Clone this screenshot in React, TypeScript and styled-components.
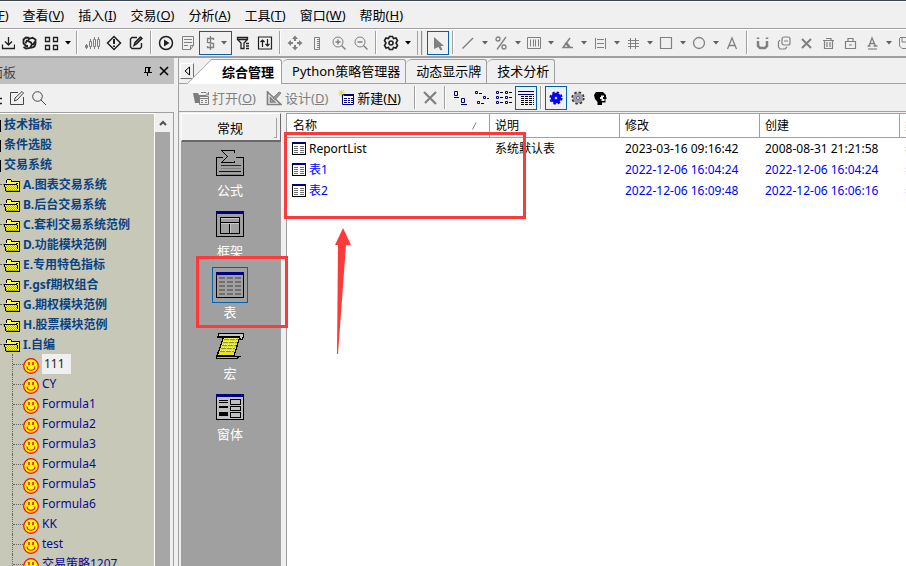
import React from "react";
import styled, { createGlobalStyle, css } from "styled-components";

const GlobalStyle = createGlobalStyle`
  * { box-sizing: border-box; }
  body { margin: 0; background: #f0f0f0; overflow: hidden; }
  body, button, table { font-family: "Noto Sans", "Noto Sans CJK SC", sans-serif; font-size: 12px; color: #000; }
  button { margin: 0; padding: 0; border: 0; background: none; white-space: nowrap; }
`;

const LINE = "#a0a0a0";
const BLUE = "#0063b1";
const RED = "#fc3a3a";

const Page = styled.div`
  position: relative;
  display: flex;
  flex-direction: column;
  height: 100vh;
  border-top: 1px solid #3c444e;
  background: #f0f0f0;
  overflow: hidden;
`;

const MenuBar = styled.nav`
  display: flex;
  flex: none;
  gap: 14px;
  height: 28px;
  margin-left: -32px;
  border-top: 1px solid #fff;
  border-bottom: 1px solid ${LINE};
`;

const MenuItem = styled.button`
  font-size: 13px;
  line-height: 26px;
`;

const Toolbar = styled.div`
  display: flex;
  flex: none;
  align-items: center;
  height: 29px;
  padding-bottom: 1px;
  border-top: 1px solid #fff;
  border-bottom: 2px solid ${LINE};
  overflow: hidden;
`;

const ToolGroup = styled.div`
  display: flex;
  flex: none;
  align-items: center;
  margin-left: -4px;
`;

const ToolButton = styled.button<{ $active?: boolean; $wide?: boolean }>`
  display: flex;
  flex: none;
  align-items: center;
  justify-content: center;
  width: ${(p) => (p.$wide ? 33 : 22)}px;
  height: 24px;
  ${(p) => p.$active && css`border: 1px solid ${BLUE};`}
`;

const CaretButton = styled.button`
  display: flex;
  flex: none;
  align-items: center;
  justify-content: center;
  width: 11px;
  height: 24px;
`;

const Separator = styled.span`
  flex: none;
  width: 2px;
  height: 23px;
  margin: 0 3px;
  border-left: 1px solid ${LINE};
  border-right: 1px solid #fff;
`;

const BandEnd = styled.span`
  flex: none;
  width: 6px;
  height: 24px;
  margin: 0 4px;
  border-left: 1px solid ${LINE};
  border-right: 2px groove #e0e0e0;
`;

const Body = styled.div`
  display: flex;
  flex: 1;
  min-height: 0;
`;

const LeftPanel = styled.aside`
  display: flex;
  flex-direction: column;
  flex: none;
  width: 178px;
  padding-right: 4px;
`;

const PanelHeader = styled.header`
  display: flex;
  flex: none;
  align-items: center;
  height: 26px;
  padding-right: 2px;
  background: #c0c0c0;
  color: #444;
  font-size: 13px;
`;

const PanelTitle = styled.span`
  flex: 1;
  margin-left: -10px;
`;

const PanelButton = styled.button`
  display: flex;
  align-items: center;
  justify-content: center;
  width: 16px;
  height: 16px;
`;

const PanelTools = styled.div`
  display: flex;
  flex: none;
  align-items: center;
  height: 28px;
  margin-left: -16px;
`;

const TreeFrame = styled.div`
  display: flex;
  flex: 1;
  min-height: 0;
  padding-right: 3px;
  border-top: 1px solid ${LINE};
  border-right: 1px solid ${LINE};
`;

const Tree = styled.ul`
  flex: 1;
  margin: 0;
  padding: 0;
  list-style: none;
  background: #c8c8b8;
  border-top: 1px solid #fff;
  border-right: 1px solid #fff;
  overflow: hidden;
`;

const RootRow = styled.li`
  display: flex;
  align-items: center;
  gap: 3px;
  height: 20px;
  color: #0a4282;
  font-weight: bold;
  white-space: nowrap;
`;

const RootMark = styled.span`
  width: 1px;
  height: 12px;
  margin-top: 4px;
  background: #000;
`;

const FolderRow = styled(RootRow)`
  gap: 0;
`;

const FolderIcon = styled.svg`
  flex: none;
  margin: 2px 3px 0 0;
`;

const Dots = styled.span`
  flex: none;
  width: 4px;
  border-top: 1px dotted #666;
`;

const LeafRow = styled.li`
  display: flex;
  align-items: center;
  height: 20px;
  margin-left: 12px;
  border-left: 1px dotted #666;
  color: #0a0a96;
  white-space: nowrap;
`;

const LeafDots = styled(Dots)`
  width: 10px;
`;

const LeafIcon = styled.svg`
  flex: none;
  margin-top: 4px;
`;

const LeafLabel = styled.span<{ $selected?: boolean }>`
  padding: 0 5px 0 3px;
  line-height: 20px;
  ${(p) =>
    p.$selected &&
    css`
      margin-left: 3px;
      padding: 0 6px 0 2px;
      background: #f0f0f0;
      color: #222;
    `}
`;

const ScrollTrack = styled.div`
  width: 15px;
  background: #a6a6a6;
`;

const ScrollUp = styled.button`
  display: flex;
  align-items: center;
  justify-content: center;
  width: 15px;
  height: 19px;
  background: #f0f0f0;
`;

const Workspace = styled.main`
  display: flex;
  flex-direction: column;
  flex: 1;
  min-width: 0;
  border-left: 1px solid ${LINE};
`;

const TabStrip = styled.div`
  display: flex;
  flex: none;
  align-items: flex-end;
  height: 26px;
  padding-left: 1px;
  border-bottom: 1px solid ${LINE};
`;

const TabScroll = styled.button`
  display: flex;
  align-items: center;
  justify-content: center;
  width: 14px;
  height: 16px;
  margin: 0 17px 4px 0;
  border: 1px solid #fff;
  border-right-color: #707070;
  border-bottom-color: #707070;
`;

const Tab = styled.button<{ $active?: boolean }>`
  position: relative;
  z-index: 0;
  height: 24px;
  padding: 0 5px 0 10px;
  border: 1px solid ${LINE};
  border-width: 1px 1px 0 0;
  border-radius: 6px 3px 0 0;
  font-size: 13px;
  line-height: 21px;
  ${(p) =>
    p.$active &&
    css`
      height: 25px;
      margin-bottom: -1px;
      padding: 0 7px 0 11px;
      border-radius: 0 3px 0 0;
      background: #fff;
      font-weight: bold;
      &::before {
        content: "";
        position: absolute;
        z-index: -1;
        top: -1px;
        bottom: 0;
        left: -12px;
        width: 24px;
        border: 1px solid ${LINE};
        border-width: 1px 0 0 1px;
        background: #fff;
        transform: skewX(-45deg);
      }
    `}
`;

const ActionBar = styled.div`
  display: flex;
  flex: none;
  align-items: center;
  height: 28px;
  padding-left: 14px;
  border-bottom: 1px solid ${LINE};
`;

const ActionButton = styled.button`
  display: flex;
  align-items: center;
  gap: 3px;
  margin-right: 10px;
  font-size: 13px;
  &:disabled { color: #808080; }
`;

const Content = styled.div`
  display: flex;
  flex: 1;
  min-height: 0;
  padding: 1px 0 0 2px;
`;

const Sidebar = styled.div`
  display: flex;
  flex-direction: column;
  flex: none;
  width: 100px;
  margin-right: 5px;
  background: #a0a0a0;
`;

const GroupButton = styled.button`
  display: flex;
  align-items: center;
  justify-content: center;
  flex: none;
  position: relative;
  height: 29px;
  margin-bottom: 3px;
  padding-right: 2px;
  border: 1px solid #fff;
  border-right-color: #696969;
  border-bottom: 2px solid #696969;
  background: #f0f0f0;
  font-size: 13px;
  &::after {
    content: "";
    position: absolute;
    right: 3px;
    top: 4px;
    width: 2px;
    height: 19px;
    border-right: 1px solid #a0a0a0;
    border-bottom: 1px solid #a0a0a0;
  }
`;

const SideItem = styled.button`
  position: relative;
  display: flex;
  flex: none;
  flex-direction: column;
  align-items: center;
  height: 61px;
  padding-right: 2px;
  color: #fff;
  font-size: 13px;
  line-height: 18px;
`;

const SideIcon = styled.span<{ $selected?: boolean }>`
  display: flex;
  align-items: center;
  justify-content: center;
  width: 36px;
  height: 36px;
  border: 1px solid ${(p) => (p.$selected ? BLUE : "transparent")};
`;

const ItemMark = styled.span`
  position: absolute;
  inset: -11px -7px 0 15px;
  height: 72px;
  border: 3px solid ${RED};
  z-index: 1;
`;

const ListPane = styled.section`
  position: relative;
  flex: 1;
  min-width: 0;
  border-left: 1px solid ${LINE};
  border-top: 1px solid ${LINE};
  background: #fff;
`;

const ListTable = styled.table`
  width: 100%;
  table-layout: fixed;
  border-collapse: separate;
  border-spacing: 0;
`;

const Column = styled.col<{ $width?: number }>`
  ${(p) => p.$width && css`width: ${p.$width}px;`}
`;

const HeadCell = styled.th`
  height: 24px;
  padding: 0 12px 0 5px;
  border-right: 1px solid ${LINE};
  border-bottom: 1px solid ${LINE};
  font-weight: normal;
  line-height: 22px;
  text-align: left;
  white-space: nowrap;
  overflow: hidden;
  &:first-child { padding-left: 6px; }
  &:last-child { border-right: 0; padding-right: 0; }
`;

const HeadLabel = styled.span`
  display: flex;
  align-items: center;
  justify-content: space-between;
`;

const Row = styled.tr<{ $user?: boolean }>`
  color: ${(p) => (p.$user ? "#0000ff" : "#000")};
`;

const Cell = styled.td`
  height: 21px;
  padding: 0 0 0 5px;
  line-height: 20px;
  white-space: nowrap;
  overflow: hidden;
`;

const NameLabel = styled.span`
  display: flex;
  align-items: center;
  gap: 3px;
`;

const ListMark = styled.span`
  position: absolute;
  top: 18px;
  left: -3px;
  width: 242px;
  height: 87px;
  border: 3px solid ${RED};
`;

const ArrowMark = styled.svg`
  position: absolute;
  top: 113px;
  left: 47px;
`;

/* ---------- icons ---------- */

const G = "#808080";
const K = "#202020";

const art: Record<string, React.ReactNode> = {
  download: <g stroke={K} fill="none"><path d="M9.500 2v8M6 6.500l3.500 3.500L13 6.500M3.500 9.500v4h12v-4" strokeWidth="1.300" /></g>,
  refresh: <g stroke={K} fill="none"><path d="M8.500 3L5 2.500 2.500 4.500v4L5 11h2M10 13l3.500-1.500 1-3v-4L11 2.500" strokeWidth="1.800" /><path d="M12 2.500L8 4 7 6l3 1.500 1 2-2 3.500-4 .500L2.500 12M4.500 8.500L6 5M14 6.500L12 10" strokeWidth="1.800" /></g>,
  grid: <g stroke={K} fill="none" strokeWidth="1.300"><path d="M2.500 2.500h4v4h-4zM10.500 2.500h4v4h-4zM2.500 10.500h4v4h-4zM10.500 10.500h4v4h-4z" /></g>,
  candle: <g stroke={G} fill="none"><path d="M2.500 9v5M6.500 4v10M10.500 2v12M14.500 2v12" /><path d="M5.500 6.500h2v5h-2zM9.500 4.500h2v7h-2zM13.500 4.500h2v7h-2z" fill="#f0f0f0" /><path d="M1.500 10.500h2v2h-2z" fill={G} /></g>,
  alert: <g stroke={K} fill="none" strokeWidth="1.500"><path d="M8 1.500L14.500 8 8 14.500 1.500 8z" /><path d="M8 4v5M8 10.500v1.500" strokeWidth="2" /></g>,
  compose: <g stroke={K} fill="none" strokeWidth="1.400"><path d="M9 2.500H4L2.500 4v8L4 13.500h8l1.500-1.500V8" /><path d="M6 10.500l1-3L12.500 2 14 3.500 8.500 9z" fill="#777" /></g>,
  play: <g><circle cx="8" cy="8" r="6.500" fill="none" stroke={K} strokeWidth="1.500" /><path d="M6 4.500L11.500 8 6 11.500z" fill={K} /></g>,
  doc: <g stroke={G} fill="none"><path d="M2.500 1.500h11v9l-3 4h-8zM13.500 10.500h-3v4M4 4.500h8M4 7.500h8M4 10.500h4" /></g>,
  dollar: <g stroke={G} fill="none" strokeWidth="1.300"><path d="M11.500 5V3.500h-6v4l6 1v4h-6V11M8.500 1v14" /></g>,
  filter: <g stroke={K} fill="none" strokeWidth="1.300"><path d="M2.500 2.500h10v2L9 8v5.500H6V8L2.500 4.500zM3 4.500h9M11 8.500h3M11 11h3M11 13.500h3" /></g>,
  updown: <g stroke={K} fill="none" strokeWidth="1.200"><path d="M1.500 2h13v12h-13z" /><path d="M5.500 12V5M3.500 7l2-2 2 2M10.500 4v7M8.500 9l2 2 2-2" /></g>,
  move: <g fill={G}><path d="M8 .500l3 3.500H5zM8 15.500L5 12h6zM.500 8L4 5v6zM15.500 8L12 11V5zM7 4h2v2H7zM7 10h2v2H7zM4 7h2v2H4zM10 7h2v2h-2z" /></g>,
  ruler: <g stroke={G} fill="none"><path d="M5.500 2.500h5v12h-5zM8 4.500h2M8 6.500h2M8 8.500h2M8 10.500h2M8 12.500h2" /></g>,
  zoomIn: <g stroke={G} fill="none"><circle cx="7" cy="7" r="5" /><path d="M4.500 7h5M7 4.500v5M10.500 10.500l4 4" strokeWidth="1.400" /></g>,
  zoomOut: <g stroke={G} fill="none"><circle cx="7" cy="7" r="5" /><path d="M4.500 7h5M10.500 10.500l4 4" strokeWidth="1.400" /></g>,
  settings: <g stroke={K} fill="none" strokeWidth="1.600"><path d="M6.500 1.500h3l1 2 2.500-.500 1.500 2.500L13 8l1.500 2.500L13 13l-2.500-.500-1 2h-3l-1-2L3 13l-1.500-2.500L3 8 1.500 5.500 3 3l2.500.500z" /><circle cx="8" cy="8" r="2" /></g>,
  cursor: <path d="M4 2l10 9H10.500l2 3.500-2 1-2-3.500L4 14z" fill={G} />,
  line: <path d="M2.500 13.500L13 3" stroke={G} strokeWidth="1.400" />,
  percent: <g stroke={G} fill="none" strokeWidth="1.300"><circle cx="5" cy="4" r="2" /><circle cx="11" cy="12" r="2" /><path d="M4 14.500L13 2" /></g>,
  bars: <g stroke={G} fill="none"><path d="M1.500 2.500h13v11h-13zM4.500 4.500v7M7.500 4.500v7M9.500 4.500v7M12.500 4.500v7" /></g>,
  angle: <g stroke={G} fill="none" strokeWidth="1.500"><path d="M11 3L4 12.500h10M6 8l4 4M7 7l4 5" /></g>,
  levels: <g stroke={G} fill="none"><path d="M3.500 3v11M13.500 3v11M5 4.500h7M5 8.500h7M5 12.500h7" /></g>,
  hash: <g stroke={G} fill="none"><path d="M5.500 3v11M10.500 3v11M3 5.500h11M3 8.500h11M3 11.500h11" /></g>,
  square: <path d="M2.500 2.500h11v11h-11z" stroke={G} fill="none" strokeWidth="1.200" />,
  circle: <circle cx="8" cy="8" r="5.500" stroke={G} fill="none" strokeWidth="1.300" />,
  compass: <g stroke={G} fill="none" strokeWidth="1.300"><path d="M3.500 14L8 3l4.500 11M5 10.500h6" /></g>,
  magnet: <g stroke={G} fill="none" strokeWidth="2.500"><path d="M4 6v5l2 2h5l2-2V6M4 2.500V4M13 2.500V4" /></g>,
  copy: <g stroke={G} fill="none" strokeWidth="1.200"><rect x="6" y="2" width="8" height="8" rx="2" /><path d="M4 5L2.500 7v5L4 14h5l2-2M8 6h4" /></g>,
  close: <path d="M4 4l9 9M13 4l-9 9" stroke={G} strokeWidth="2" />,
  trash: <g stroke={G} fill="none"><path d="M3 5.500h11M4.500 5.500v8h8v-8M6 3.500h5v2M7 7v5M10 7v5" strokeWidth="1.200" /></g>,
  lock: <g stroke={G} fill="none" strokeWidth="1.200"><path d="M3.500 6.500h10v7h-10zM6 6V3.500h5V6M7 10h3" /></g>,
  textColor: <g><path d="M5 11L8 3l3.500 8M6 8.500h4M3.500 11h3M9.500 11h4" stroke={G} fill="none" strokeWidth="1.300" /><path d="M4 13h9v2H4z" fill="#b0b0b0" /></g>,
  save: <g stroke={G} fill="none"><path d="M3 2.500h11v11H5L2.500 11V3M5 3v4h6" /></g>,
  page: <path d="M11.500 2v9M8 8.500h7M11 13.500h4" stroke={K} strokeWidth="1.300" />,
  note: <g stroke="#444" fill="none"><path d="M9 2.500H1.500v12h13V7" /><path d="M5.500 11l.500-3L13 1.500 14.500 3 8 10z" /></g>,
  search: <g stroke="#444" fill="none"><circle cx="6.500" cy="6.500" r="4.800" /><path d="M10 10l5 5" /></g>,
  pin: <path d="M5 4.500h6M5.500 4.500v5M8.500 4v6M9.500 4v6M4 9.500h8M7.500 10v3" stroke="#000" fill="none" />,
  panelClose: <path d="M4 4l8 8M12 4l-8 8" stroke="#000" strokeWidth="1.600" />,
  open: <g><path d="M0 3h5l1 2h7v5H9v3H2z" fill="#7c7c7c" /><path d="M8 2.500h5l2 2M15.500 2v3h-3" stroke={G} fill="none" /><path d="M6.500 6.500h9v8h-9z" fill="#eee" stroke={G} /><path d="M6 8.500h10M8 10.500h2M12 10.500h2M8 12.500h2M12 12.500h2" stroke={G} /></g>,
  design: <g stroke={G} fill="none"><path d="M1.500 1v13.500H15L1.500 2M4.500 8v4h4z" strokeWidth="1.700" /><path d="M7 8l6-6 2 1-6 7z" fill="#999" /></g>,
  create: <g><path d="M4.500 4.500h11v10h-11z" fill="#fff" stroke="#000080" /><path d="M4 4h12v2H4z" fill="#000080" /><path d="M6 8.500h3M10 8.500h2M13 8.500h2M6 10.500h3M10 10.500h2M13 10.500h2M6 12.500h3M10 12.500h2M13 12.500h2" stroke="#000080" /><path d="M1 0l5 6M6 0L1 6M0 3h7M3.500 0v7" stroke="#d8d820" strokeWidth=".8" /></g>,
  remove: <path d="M2 2l12 12M14 2L3 13" stroke={G} strokeWidth="2.200" />,
  large: <g stroke="#000080" fill="none"><path d="M2.500 1.500h3v4h-3zM9.500 8.500h3v4h-3zM2 7.500h5M9 14.500h6" /></g>,
  small: <g stroke="#000080" fill="none"><path d="M1.500 1.500h2v2h-2zM9.500 6.500h2v2h-2zM3.500 11.500h2v2h-2z" /><path d="M5 3.500h3M13 8.500h2M7 13.500h3" stroke="#000" /></g>,
  list: <g stroke="#000080" fill="none"><path d="M.500 1.500h2v2h-2zM9.500 1.500h2v2h-2zM.500 6.500h2v2h-2zM9.500 6.500h2v2h-2zM.500 11.500h2v2h-2zM9.500 11.500h2v2h-2z" /><path d="M4 2.500h3M13 2.500h3M4 7.500h3M13 7.500h3M4 12.500h3M13 12.500h3" stroke="#000" /></g>,
  detail: <g stroke="#000"><path d="M0 1.500h16M0 4.500h16" stroke="#000080" /><path d="M3 6.500h13M3 8.500h13M3 10.500h13M3 12.500h13M3 14.500h13" strokeDasharray="3 1" /></g>,
  head: <g><path d="M4 2h7l3 3v2l1 1.500-1.500.500v3.500H10V15H5.500v-3L3 9 2 5z" fill="#000" /><path d="M9 5.500h3V7h-1v2h1.500v2H9.500V9H8V7h1z" fill="#f0f0f0" /></g>,
};

const Icon = ({ name, size = 16 }: { name: string; size?: number }) => (
  <svg width={size} height={size} viewBox="0 0 16 16" aria-hidden="true">{art[name]}</svg>
);

const Cog = ({ color }: { color: string }) => (
  <svg width="16" height="16" viewBox="0 0 16 16" aria-hidden="true">
    <circle cx="8" cy="8" r="5.200" fill={color} />
    <circle cx="8" cy="8" r="5.800" fill="none" stroke={color === "#0000ff" ? "#0000d0" : "#333"} strokeWidth="1.600" strokeDasharray="2.500 2.050" />
    <circle cx="8" cy="8" r="1.500" fill="#f0f0f0" stroke="#000080" strokeWidth=".5" />
  </svg>
);

const Caret = ({ color = "#606060" }: { color?: string }) => (
  <svg width="6" height="4" viewBox="0 0 6 4" aria-hidden="true"><path d="M0 0h6L3 3.500z" fill={color} /></svg>
);

const Folder = () => (
  <FolderIcon width="16" height="13" viewBox="0 0 16 13" shapeRendering="crispEdges" aria-hidden="true">
    <path d="M2 1h5v2h8v8H2z" fill="#ffff33" />
    <path d="M2.500 4V1.500L3.500.500h3l1 1.500v.500h7.500v9" fill="none" stroke="#000" />
    <path d="M0 5h13v1h1v6H2V9H1V7H0z" fill="#b4b400" />
    <path d="M1 6.500h12M3 8.500h11M3 10.500h11" stroke="#ffff33" strokeDasharray="1 1" />
    <path d="M2 7.500h12M2 9.500h12" stroke="#ffff33" strokeDasharray="1 1" />
    <path d="M0 5.500h12.500M.500 5v3M1.500 8v4M13.500 6v4M2 12.500h14M15.500 3v10M12 4.500h2" fill="none" stroke="#000" />
  </FolderIcon>
);

const Smile = () => (
  <LeafIcon width="16" height="16" viewBox="0 0 16 16" aria-hidden="true">
    <circle cx="8" cy="8" r="7.300" fill="#ffff00" stroke="#f00" strokeWidth="1.200" />
    <path d="M6 4v3M10 4v3" stroke="#f00" strokeWidth="1.500" />
    <path d="M4 8.500c.500 5 7.500 5 8 0" fill="none" stroke="#f00" strokeWidth="1.200" />
  </LeafIcon>
);

const ReportIcon = () => (
  <svg width="14" height="13" viewBox="0 0 14 13" shapeRendering="crispEdges" aria-hidden="true">
    <path d="M.500 1h13v11.500H.500z" fill="#fff" stroke="#000" />
    <path d="M0 0h14v2H0z" fill="#000080" />
    <path d="M2 4h4v1H2zM8 4h4v1H8zM2 6h4v1H2zM8 6h4v1H8zM2 8h4v1H2zM8 8h4v1H8zM2 10h4v1H2zM8 10h4v1H8z" fill="#707070" />
  </svg>
);

const frame = <><path d="M.500.500h27v25H.500z" fill="none" stroke="#000" /><path d="M0 0h28v3H0z" fill="#000080" /></>;

const sideArt: Record<string, React.ReactNode> = {
  formula: <g fill="none" stroke="#000"><path d="M7 7.500H.500v18h27v-18H20" /><path d="M18.500 2.500V.500h-13l6 6-6 6h13v-2" strokeWidth="1.300" /><path d="M5 15.500h20" stroke="#800000" /><path d="M5 18.500h20M5 24h20" stroke="#808080" /><path d="M3 21.500h22" stroke="#000080" /></g>,
  frame: <g>{frame}<path d="M4.500 6.500h19v16h-19zM4.500 11.500h19M13.500 12v10" fill="none" stroke="#000" /><path d="M5 7.500h18M5 12.500h18M14.500 12v10" stroke="#c8c8c8" fill="none" /></g>,
  table: <g>{frame}<path d="M3 6h22M3 10h22M3 14h22M3 18h22M3 22h22" stroke="#707070" strokeWidth="2" strokeDasharray="6 2" /></g>,
  macro: <g><path d="M8 3h16l-6 20H1z" fill="#e4e420" stroke="#000" strokeWidth="1.400" /><path d="M8 6.500h14M7 9.500h14M6 12.500h14M5 15.500h14M4 18.500h14" stroke="#8c8c60" strokeDasharray="5 1" /><path d="M8 5h14M7 8h14M6 11h14M5 14h14M4 17h13" stroke="#ffff70" strokeDasharray="1 1" /><path d="M3 .500h20l1.500 0h3v3l-1.500 3h-1.500l-1-2.500H2z" fill="#c8c8c0" stroke="#000" strokeWidth="1.300" /><path d="M.500 25.500v-2.500h18l1 .500h4l-3 2z" fill="#b8b8a0" stroke="#000" strokeWidth="1.300" /></g>,
  form: <g><path d="M0 0h28v26H0z" fill="#c0c0c0" />{frame}<path d="M3 6h9M3 8h9" stroke="#000" /><path d="M3 12h9v2H3zM3 18h9v4H3z" fill="#000" /><path d="M14.500 5.500h10v5h-10zM14.500 12.500h10v4h-10zM14.500 18.500h10v5h-10z" fill="#c0c0c0" stroke="#000" strokeWidth="1.400" /></g>,
};

/* ---------- data ---------- */

const menus = [["文件", "F"], ["查看", "V"], ["插入", "I"], ["交易", "O"], ["分析", "A"], ["工具", "T"], ["窗口", "W"], ["帮助", "H"]];

const tools = [
  "download", "refresh", "grid", "^dark", "|", "candle", "alert", "compose", "|", "play", "doc", "[dollar", "filter", "updown", "|",
  "move", "ruler", "zoomIn", "zoomOut", "|", "settings", "^dark", "||", "*cursor", "|", "line", "^", "percent", "^", "bars", "^",
  "angle", "^", "levels", "^", "hash", "^", "square", "^", "circle", "^", "compass", "|", "magnet", "copy", "close", "trash",
  "lock", "textColor", "^", "save",
];

const roots = ["技术指标", "条件选股", "交易系统"];
const folders = ["A.图表交易系统", "B.后台交易系统", "C.套利交易系统范例", "D.功能模块范例", "E.专用特色指标", "F.gsf期权组合", "G.期权模块范例", "H.股票模块范例", "I.自编"];
const leaves = ["111", "CY", "Formula1", "Formula2", "Formula3", "Formula4", "Formula5", "Formula6", "KK", "test", "交易策略1207"];
const tabs = ["综合管理", "Python策略管理器", "动态显示牌", "技术分析"];
const sideItems = [["formula", "公式"], ["frame", "框架"], ["table", "表"], ["macro", "宏"], ["form", "窗体"]];
const reports = [
  { name: "ReportList", note: "系统默认表", modified: "2023-03-16 09:16:42", created: "2008-08-31 21:21:58", user: false },
  { name: "表1", note: "", modified: "2022-12-06 16:04:24", created: "2022-12-06 16:04:24", user: true },
  { name: "表2", note: "", modified: "2022-12-06 16:09:48", created: "2022-12-06 16:06:16", user: true },
];

const Tool = ({ code }: { code: string }) => {
  if (code === "|") return <Separator />;
  if (code === "||") return <BandEnd />;
  if (code.startsWith("^")) return <CaretButton aria-label="更多"><Caret color={code === "^dark" ? "#000" : undefined} /></CaretButton>;
  if (code.startsWith("[")) return <ToolButton $active $wide aria-label={code.slice(1)}><Icon name={code.slice(1)} /><CaretButton as="span"><Caret /></CaretButton></ToolButton>;
  if (code.startsWith("*")) return <ToolButton $active aria-label={code.slice(1)}><Icon name={code.slice(1)} /></ToolButton>;
  return <ToolButton aria-label={code}><Icon name={code} /></ToolButton>;
};

export default function App() {
  return (
    <>
      <GlobalStyle />
      <Page>
        <MenuBar>
          {menus.map(([label, key]) => <MenuItem key={key}>{label}(<u>{key}</u>)</MenuItem>)}
        </MenuBar>
        <Toolbar>
          <ToolGroup>{tools.map((code, i) => <Tool key={i} code={code} />)}</ToolGroup>
        </Toolbar>
        <Body>
          <LeftPanel>
            <PanelHeader>
              <PanelTitle>面板</PanelTitle>
              <PanelButton aria-label="固定"><Icon name="pin" /></PanelButton>
              <PanelButton aria-label="关闭"><Icon name="panelClose" /></PanelButton>
            </PanelHeader>
            <PanelTools>
              <ToolButton aria-label="新建"><Icon name="page" /></ToolButton>
              <ToolButton aria-label="编辑"><Icon name="note" /></ToolButton>
              <ToolButton aria-label="搜索"><Icon name="search" /></ToolButton>
            </PanelTools>
            <TreeFrame>
              <Tree>
                {roots.map((r) => <RootRow key={r}><RootMark />{r}</RootRow>)}
                {folders.map((f) => <FolderRow key={f}><Dots /><Folder />{f}</FolderRow>)}
                {leaves.map((l, i) => <LeafRow key={l}><LeafDots /><Smile /><LeafLabel $selected={i === 0}>{l}</LeafLabel></LeafRow>)}
              </Tree>
              <ScrollTrack>
                <ScrollUp aria-label="向上滚动">
                  <svg width="8" height="6" viewBox="0 0 8 6"><path d="M1 5l3-3 3 3" fill="none" stroke="#505050" strokeWidth="2" /></svg>
                </ScrollUp>
              </ScrollTrack>
            </TreeFrame>
          </LeftPanel>
          <Workspace>
            <TabStrip>
              <TabScroll aria-label="向左">
                <svg width="6" height="10" viewBox="0 0 6 10"><path d="M5.500 1v8L1 5z" fill="none" stroke="#000" /></svg>
              </TabScroll>
              {tabs.map((t, i) => <Tab key={t} $active={i === 0}>{t}</Tab>)}
            </TabStrip>
            <ActionBar>
              <ActionButton disabled><Icon name="open" /><span>打开(<u>O</u>)</span></ActionButton>
              <ActionButton disabled><Icon name="design" /><span>设计(<u>D</u>)</span></ActionButton>
              <ActionButton><Icon name="create" /><span>新建(<u>N</u>)</span></ActionButton>
              <Separator />
              <ToolButton aria-label="删除"><Icon name="remove" /></ToolButton>
              <Separator />
              <ToolButton aria-label="大图标"><Icon name="large" /></ToolButton>
              <ToolButton aria-label="小图标"><Icon name="small" /></ToolButton>
              <ToolButton aria-label="列表"><Icon name="list" /></ToolButton>
              <ToolButton $active aria-label="详细"><Icon name="detail" /></ToolButton>
              <Separator />
              <ToolButton $active aria-label="用户"><Cog color="#0000ff" /></ToolButton>
              <ToolButton aria-label="系统"><Cog color="#a0a0a0" /></ToolButton>
              <ToolButton aria-label="作者"><Icon name="head" /></ToolButton>
            </ActionBar>
            <Content>
              <Sidebar>
                <GroupButton>常规</GroupButton>
                {sideItems.map(([id, label]) => (
                  <SideItem key={id}>
                    <SideIcon $selected={id === "table"}>
                      <svg width="28" height="26" viewBox="0 0 28 26" shapeRendering="crispEdges" aria-hidden="true">{sideArt[id]}</svg>
                    </SideIcon>
                    {label}
                    {id === "table" && <ItemMark />}
                  </SideItem>
                ))}
              </Sidebar>
              <ListPane>
                <ListTable>
                  <colgroup>
                    <Column $width={203} /><Column $width={130} /><Column $width={140} /><Column $width={140} /><Column />
                  </colgroup>
                  <thead>
                    <tr>
                      <HeadCell>
                        <HeadLabel>名称<svg width="5" height="8" viewBox="0 0 5 8"><path d="M.500 7.500L4 .500" stroke="#888" /></svg></HeadLabel>
                      </HeadCell>
                      <HeadCell>说明</HeadCell>
                      <HeadCell>修改</HeadCell>
                      <HeadCell>创建</HeadCell>
                      <HeadCell>类型</HeadCell>
                    </tr>
                  </thead>
                  <tbody>
                    {reports.map((r) => (
                      <Row key={r.name} $user={r.user}>
                        <Cell><NameLabel><ReportIcon />{r.name}</NameLabel></Cell>
                        <Cell>{r.note}</Cell>
                        <Cell>{r.modified}</Cell>
                        <Cell>{r.created}</Cell>
                        <Cell>表</Cell>
                      </Row>
                    ))}
                  </tbody>
                </ListTable>
                <ListMark />
                <ArrowMark width="20" height="128" viewBox="0 0 20 128" aria-hidden="true">
                  <path d="M9 1l8 17h-5L4 127H3l1-109H1z" fill={RED} />
                </ArrowMark>
              </ListPane>
            </Content>
          </Workspace>
        </Body>
      </Page>
    </>
  );
}
